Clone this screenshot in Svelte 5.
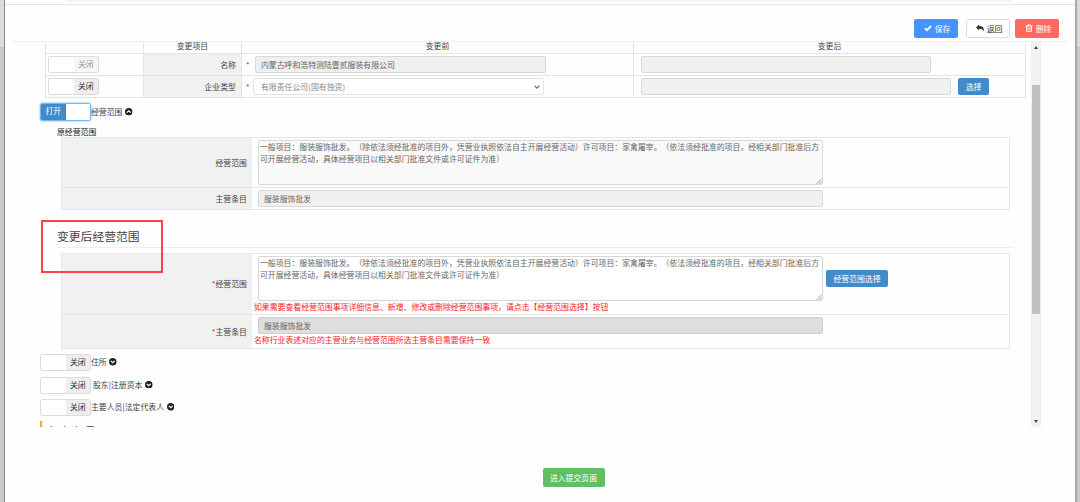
<script lang="ts">
	const scopeText =
		'一般项目：服装服饰批发。（除依法须经批准的项目外，凭营业执照依法自主开展经营活动）许可项目：家禽屠宰。（依法须经批准的项目，经相关部门批准后方可开展经营活动，具体经营项目以相关部门批准文件或许可证件为准）';

	const sections = [
		{ name: '住所', indent: false },
		{ name: '股东|注册资本', indent: true },
		{ name: '主要人员|法定代表人', indent: false }
	];
</script>

{#snippet toggle(on: boolean, disabled: boolean)}
	<span class="toggle" class:on class:disabled>
		{#if on}
			<span class="state">打开</span><span class="knob"></span>
		{:else}
			<span class="knob"></span><span class="state">关闭</span>
		{/if}
	</span>
{/snippet}

{#snippet chevron(up: boolean)}
	<svg class="chevron" class:up viewBox="0 0 16 16">
		<circle cx="8" cy="8" r="8" fill="#222" />
		<path d="M3.8 6.2 8 10.2l4.2-4" fill="none" stroke="#fff" stroke-width="2.6" />
	</svg>
{/snippet}

{#snippet area(readonly: boolean)}
	<div class="area" class:readonly>
		{scopeText}
		<svg class="grip" viewBox="0 0 6 6"><path d="M0.5 6 6 0.5M3.3 6 6 3.3" stroke="#888" stroke-width="0.8" /></svg>
	</div>
{/snippet}

<div class="screen">
	<div class="window">
		<div class="browser"><div class="address"></div></div>

		<header>
			<button class="btn save">
				<svg viewBox="0 0 16 16"><path d="M1.8 8.2 6 12.4l8.2-8.4" fill="none" stroke="#fff" stroke-width="3.6" /></svg>
				保存
			</button>
			<button class="btn back">
				<svg viewBox="0 0 16 16"><path d="M6.4 1v3.2c6 0 9.4 2.6 9.2 6.6-.1 1.8-.8 3-1.8 4.2.6-4-2-5.4-7.4-5.3V13L0 7z" fill="#333" /></svg>
				返回
			</button>
			<button class="btn remove">
				<svg viewBox="0 0 16 16" fill="none" stroke="#fff" stroke-width="1.8"><path d="M1 4h14M5.3 4V1.6h5.4V4M3 4v10.8h10V4M6.2 6.5v6M9.8 6.5v6" /></svg>
				删除
			</button>
		</header>

		<div class="viewport">
			<div class="content">
				<div class="changes">
					<div class="row head">
						<span></span><span>变更项目</span><span>变更前</span><span>变更后</span>
					</div>
					<div class="row">
						<div class="cell">{@render toggle(false, true)}</div>
						<div class="cell name">名称</div>
						<div class="cell before"><i class="star">*</i><div class="input first">内蒙古呼和浩特测陆壹贰服装有限公司</div></div>
						<div class="cell after"><div class="input narrow"></div></div>
					</div>
					<div class="row">
						<div class="cell">{@render toggle(false, false)}</div>
						<div class="cell name">企业类型</div>
						<div class="cell before">
							<i class="star">*</i>
							<div class="input select">
								有限责任公司(国有独资)
								<svg viewBox="0 0 8 8"><path d="M1.6 2.8 4 5.2l2.4-2.4" fill="none" stroke="#777" stroke-width="1.3" /></svg>
							</div>
						</div>
						<div class="cell after"><div class="input wide"></div><button class="btn pick">选择</button></div>
					</div>
				</div>

				<div class="section open">{@render toggle(true, false)}<span>经营范围</span>{@render chevron(true)}</div>
				<div class="subtitle">原经营范围</div>

				<div class="scope original">
					<div class="label">经营范围</div>
					<div class="value">{@render area(true)}</div>
					<div class="label">主营条目</div>
					<div class="value"><div class="input">服装服饰批发</div></div>
				</div>

				<h2>变更后经营范围</h2>

				<div class="scope changed">
					<div class="label"><em>*</em>经营范围</div>
					<div class="value">
						<div class="line">{@render area(false)}<button class="btn pick">经营范围选择</button></div>
						<p>如果需要查看经营范围事项详细信息、新增、修改或删除经营范围事项，请点击【经营范围选择】按钮</p>
					</div>
					<div class="label"><em>*</em>主营条目</div>
					<div class="value">
						<div class="input dark">服装服饰批发</div>
						<p>名称行业表述对应的主营业务与经营范围所选主营条目需要保持一致</p>
					</div>
				</div>

				<div class="sections">
					{#each sections as s}
						<div class="section">
							{@render toggle(false, false)}<span class:indent={s.indent}>{s.name}</span>{@render chevron(false)}
						</div>
					{/each}
				</div>
				<div class="notice">备案事项</div>
			</div>

			<div class="scrollbar">
				<svg viewBox="0 0 4 3"><path d="M0 3 2 0l2 3z" fill="#444" /></svg>
				<div class="thumb"></div>
				<svg class="down" viewBox="0 0 4 3"><path d="M0 0l2 3 2-3z" fill="#444" /></svg>
			</div>
		</div>

		<footer><button class="btn submit">进入提交页面</button></footer>
	</div>
	<div class="marker"></div>
</div>

<style>
	:global(body) {
		overflow: hidden;
	}
	.screen,
	.screen :global(*) {
		box-sizing: border-box;
	}
	.screen {
		position: relative;
		width: 1080px;
		height: 502px;
		padding: 0 5px 0 4px;
		background: linear-gradient(#dcdcdc 47px, #c9c9c9 47px);
		font: 7.88px/11px 'Noto Sans CJK SC', sans-serif;
		text-spacing-trim: space-all;
		color: #444;
	}
	.window {
		height: 502px;
		background: #fefefe;
		border-left: 1px solid #888;
		box-shadow: 2px 0 1px #aaa;
	}
	/* box drawn round the heading */
	.marker {
		position: absolute;
		left: 41px;
		top: 220px;
		width: 122px;
		height: 53px;
		border: 2px solid #f94545;
	}
	.browser {
		height: 5px;
		border-bottom: 1px solid #e1e4e5;
	}
	.address {
		width: 945px;
		height: 2px;
		margin-left: 62px;
		background: #f1f3f4;
		border-radius: 0 0 4px 4px;
	}
	header {
		display: flex;
		justify-content: flex-end;
		height: 37px;
		margin: 0 8px;
		padding: 14px 8px 0 0;
		border-bottom: 1px solid #efefef;
	}
	.btn {
		display: flex;
		align-items: center;
		justify-content: center;
		height: 17px;
		padding: 0 0 1px;
		border: 0;
		border-radius: 2px;
		font: inherit;
		color: #fff;
		white-space: nowrap;
	}
	header .btn {
		width: 44px;
		height: 19px;
		padding-left: 2px;
		gap: 3px;
	}
	header svg {
		width: 8px;
		height: 8px;
	}
	.save {
		background: #4394ff;
	}
	header .back {
		margin: 0 5px 0 8px;
		background: #fff;
		border: 1px solid #ddd;
		color: #333;
	}
	.remove {
		background: #ff6a5e;
	}
	.viewport {
		display: flex;
		justify-content: space-between;
		height: 385px;
		padding: 0 34px 0 35px;
		overflow: hidden;
	}
	.content {
		width: 986px;
	}
	.changes {
		width: 981px;
		margin-left: 5px;
		border: 1px solid #e4e4e4;
		border-width: 0 1px 0 1px;
	}
	.row {
		display: grid;
		grid-template-columns: 98px 98px 392px 1fr;
		height: 22px;
		border-bottom: 1px solid #e4e4e4;
	}
	.row.head {
		height: 12px;
		line-height: 8px;
		text-align: center;
	}
	.row > :global(*) {
		border-right: 1px solid #e4e4e4;
	}
	.row > :global(:last-child) {
		border-right: 0;
	}
	.cell {
		display: flex;
		align-items: center;
		padding-left: 2px;
	}
	.name {
		justify-content: flex-end;
		padding: 0 5px 1px 0;
		background: #f1f1f1;
	}
	.before {
		padding-left: 4px;
	}
	.after {
		padding-left: 7px;
	}
	.star {
		width: 9px;
		color: #f22;
		font-style: normal;
	}
	.toggle {
		display: flex;
		width: 51px;
		height: 17px;
		border: 1px solid #dcdcdc;
		border-radius: 2px;
		overflow: hidden;
		line-height: 14px;
		text-align: center;
		color: #333;
	}
	.toggle > :global(*) {
		flex: 1;
	}
	.knob {
		background: #fff;
	}
	.state {
		background: #eee;
	}
	.disabled {
		color: #999;
	}
	.disabled .state {
		background: #f6f6f6;
	}
	.toggle.on {
		height: 18px;
		border-color: #78b6ee;
		box-shadow: 0 0 3px #8ec4f3;
		color: #fff;
	}
	.on .state {
		background: #428bca;
	}
	.input {
		display: flex;
		align-items: center;
		width: 565px;
		height: 17px;
		padding: 0 5px 1px;
		background: #f0f0f0;
		border: 1px solid #d8d8d8;
		border-radius: 2px;
		color: #666;
	}
	.input.first {
		width: 291px;
	}
	.input.narrow {
		width: 290px;
	}
	.input.wide {
		width: 310px;
		margin-right: 7px;
	}
	.input.select {
		justify-content: space-between;
		width: 291px;
		margin-left: -2px;
		padding: 0 2px 0 7px;
		background: #fff;
		border-color: #e2e2e2;
		color: #888;
	}
	.select svg {
		width: 8px;
		height: 8px;
	}
	.input.dark {
		background: #dedede;
		border-color: #cfcfcf;
	}
	.pick {
		width: 31px;
		background: #428bca;
	}
	.section {
		display: flex;
		align-items: center;
		height: 17px;
	}
	.section > span:not(.toggle) {
		padding-bottom: 2px;
	}
	.section.open {
		height: 18px;
		margin-top: 5px;
	}
	.indent {
		margin-left: 2px;
	}
	.chevron {
		width: 7.5px;
		height: 7.5px;
		margin: 0 0 1px 2.7px;
	}
	.chevron.up {
		transform: rotate(180deg);
	}
	.subtitle {
		height: 11px;
		margin: 5px 0 0 17px;
		color: #222;
	}
	.scope {
		display: grid;
		grid-template-columns: 190px 1fr;
		width: 949px;
		margin-left: 21px;
		border: 1px solid #e6e6e6;
	}
	.original {
		grid-template-rows: 50px 21px;
		height: 73px;
	}
	.changed {
		grid-template-rows: 61px 33px;
		height: 96px;
		margin-top: 5px;
	}
	.label {
		display: flex;
		align-items: center;
		justify-content: flex-end;
		padding: 0 5px 1px 0;
		background: #f1f1f1;
	}
	.label em {
		color: #f22;
		font-style: normal;
	}
	.value {
		padding: 2px 0 0 6px;
	}
	.scope > :global(:nth-child(-n + 2)) {
		border-bottom: 1px solid #e6e6e6;
	}
	.area {
		position: relative;
		width: 565px;
		height: 45px;
		padding: 0 1px;
		background: #fff;
		border: 1px solid #d8d8d8;
		border-radius: 2px;
		line-height: 11.5px;
		color: #666;
	}
	.area.readonly {
		background: #f9f9f9;
	}
	.grip {
		position: absolute;
		right: 0;
		bottom: 0;
		width: 6px;
		height: 6px;
	}
	.line {
		display: flex;
		align-items: center;
		gap: 3px;
	}
	.line .pick {
		width: 62px;
	}
	p {
		margin: 0 0 0 -4px;
		color: #f22;
	}
	h2 {
		width: 957px;
		height: 22px;
		margin: 16px 0 0 17px;
		border-bottom: 1px solid #eee;
		font-size: 11.8px;
		font-weight: 400;
		line-height: 20px;
	}
	.sections {
		display: grid;
		gap: 5.5px;
		margin-top: 5px;
	}
	.notice {
		height: 12px;
		margin-top: 5px;
		padding-left: 5px;
		border-left: 2px solid #f9a825;
		font-size: 11.8px;
		line-height: 20px;
	}
	.scrollbar {
		display: flex;
		flex-direction: column;
		align-items: center;
		width: 10px;
		padding: 4px 0;
		background: #f1f1f1;
	}
	.scrollbar svg {
		width: 4px;
		height: 3px;
	}
	.thumb {
		width: 8px;
		height: 229px;
		margin-top: 36px;
		background: #c1c1c1;
	}
	.down {
		margin-top: auto;
	}
	footer {
		display: flex;
		justify-content: center;
		padding: 41px 0 0 67px;
	}
	.submit {
		width: 62px;
		height: 19px;
		background: #5fbf62;
	}
</style>
